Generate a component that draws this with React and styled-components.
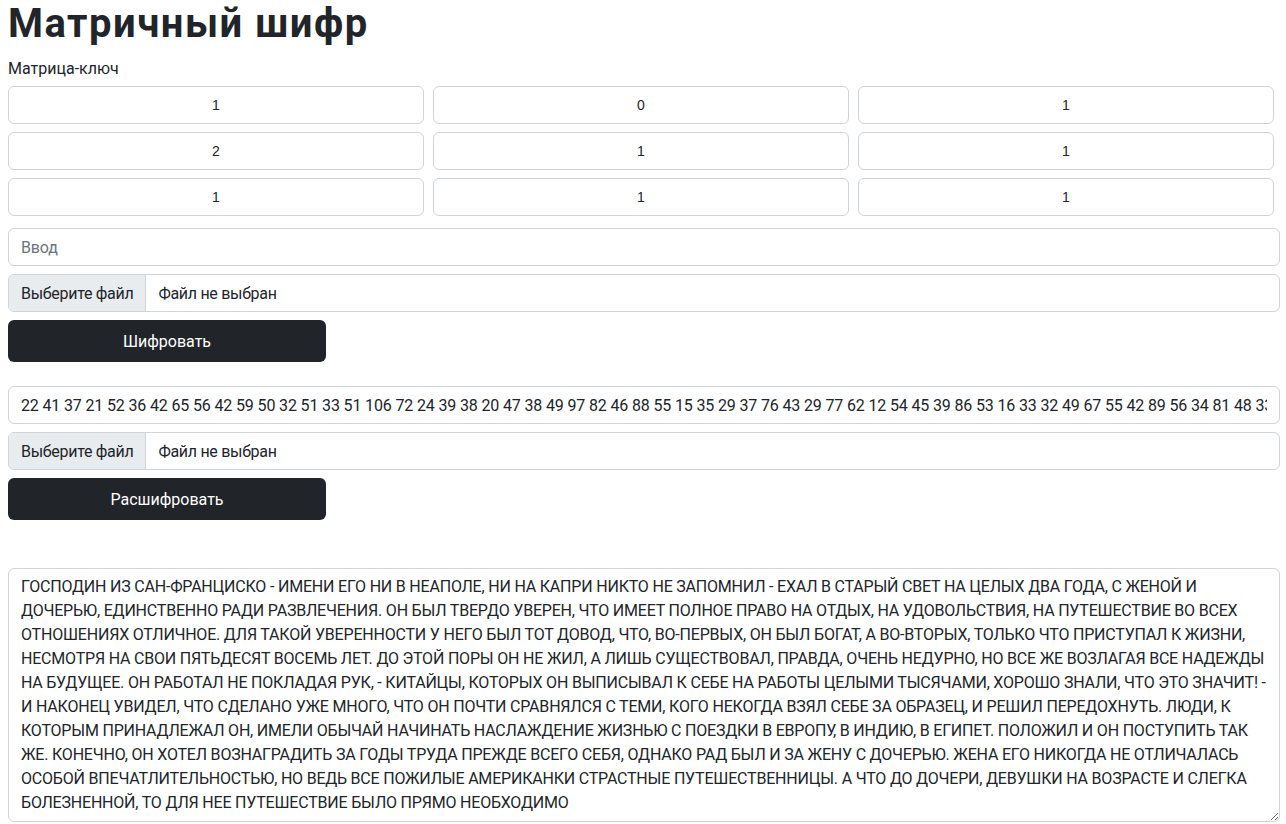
import React, { useState } from "react";
import styled, { createGlobalStyle } from "styled-components";

const FONT = `Roboto, "Open Sans", sans-serif`;

const GlobalStyle = createGlobalStyle`
  * { box-sizing: border-box; }
  body {
    margin: 0;
    font-family: ${FONT};
    font-size: 16px;
    color: #212529;
    background: #fff;
  }
`;

const Page = styled.div`
  padding: 0 6px 0 8px;
  display: flex;
  flex-direction: column;
`;

const Title = styled.h1`
  margin: 0 0 9px;
  font-size: 40px;
  line-height: 48px;
  font-weight: 700;
  letter-spacing: 1.5px;
`;

const Label = styled.label`
  font-size: 16px;
  line-height: 24px;
  margin-bottom: 5px;
`;

const Matrix = styled.div`
  width: 1266px;
  display: grid;
  grid-template-columns: repeat(3, 1fr);
  column-gap: 9px;
  row-gap: 8px;
  margin-bottom: 12px;
`;

const Cell = styled.input`
  height: 38px;
  border: 1px solid #ced4da;
  border-radius: 6px;
  text-align: center;
  font-family: "Liberation Sans", Arial, sans-serif;
  font-size: 14px;
  color: #212529;
  outline: none;
  -moz-appearance: textfield;
  &::-webkit-inner-spin-button,
  &::-webkit-outer-spin-button {
    -webkit-appearance: none;
    margin: 0;
  }
`;

const Field = styled.input`
  height: 38px;
  width: 100%;
  border: 1px solid #ced4da;
  border-radius: 6px;
  padding: 6px 12px;
  font-family: ${FONT};
  font-size: 16px;
  letter-spacing: -0.15px;
  color: #212529;
  margin-bottom: 8px;
  outline: none;
  &::placeholder { color: #6c757d; }
`;

const FileBox = styled.label`
  height: 38px;
  display: flex;
  align-items: stretch;
  border: 1px solid #ced4da;
  border-radius: 6px;
  overflow: hidden;
  margin-bottom: 8px;
  cursor: pointer;
  letter-spacing: -0.3px;
  input { display: none; }
`;

const FileButton = styled.span`
  display: flex;
  align-items: center;
  padding: 0 12px;
  background: #e9ecef;
  border-right: 1px solid #ced4da;
`;

const FileName = styled.span`
  display: flex;
  align-items: center;
  padding: 0 12px;
`;

const Action = styled.button`
  width: 318px;
  height: 42px;
  border: none;
  border-radius: 6px;
  background: #212529;
  color: #fff;
  font-family: ${FONT};
  font-size: 16px;
  margin-bottom: ${(p) => p.$after}px;
  cursor: pointer;
`;

const Output = styled.textarea`
  height: 254px;
  width: 100%;
  border: 1px solid #ced4da;
  border-radius: 6px;
  padding: 6px 12px;
  font-family: ${FONT};
  font-size: 16px;
  line-height: 24px;
  letter-spacing: -0.2px;
  color: #212529;
  outline: none;
`;

const KEY = [1, 0, 1, 2, 1, 1, 1, 1, 1];

const CIPHER =
  "22 41 37 21 52 36 42 65 56 42 59 50 32 51 33 51 106 72 24 39 38 20 47 38 49 97 82 46 88 55 15 35 29 37 76 43 29 77 62 12 54 45 39 86 53 16 33 32 49 67 55 42 89 56 34 81 48 33 61 27 44 90 58 31 46 72 19";

// строки разбиты так же, как в исходном окне
const TEXT = [
  "ГОСПОДИН ИЗ САН-ФРАНЦИСКО - ИМЕНИ ЕГО НИ В НЕАПОЛЕ, НИ НА КАПРИ НИКТО НЕ ЗАПОМНИЛ - ЕХАЛ В СТАРЫЙ СВЕТ НА ЦЕЛЫХ ДВА ГОДА, С ЖЕНОЙ И",
  "ДОЧЕРЬЮ, ЕДИНСТВЕННО РАДИ РАЗВЛЕЧЕНИЯ. ОН БЫЛ ТВЕРДО УВЕРЕН, ЧТО ИМЕЕТ ПОЛНОЕ ПРАВО НА ОТДЫХ, НА УДОВОЛЬСТВИЯ, НА ПУТЕШЕСТВИЕ ВО ВСЕХ",
  "ОТНОШЕНИЯХ ОТЛИЧНОЕ. ДЛЯ ТАКОЙ УВЕРЕННОСТИ У НЕГО БЫЛ ТОТ ДОВОД, ЧТО, ВО-ПЕРВЫХ, ОН БЫЛ БОГАТ, А ВО-ВТОРЫХ, ТОЛЬКО ЧТО ПРИСТУПАЛ К ЖИЗНИ,",
  "НЕСМОТРЯ НА СВОИ ПЯТЬДЕСЯТ ВОСЕМЬ ЛЕТ. ДО ЭТОЙ ПОРЫ ОН НЕ ЖИЛ, А ЛИШЬ СУЩЕСТВОВАЛ, ПРАВДА, ОЧЕНЬ НЕДУРНО, НО ВСЕ ЖЕ ВОЗЛАГАЯ ВСЕ НАДЕЖДЫ",
  "НА БУДУЩЕЕ. ОН РАБОТАЛ НЕ ПОКЛАДАЯ РУК, - КИТАЙЦЫ, КОТОРЫХ ОН ВЫПИСЫВАЛ К СЕБЕ НА РАБОТЫ ЦЕЛЫМИ ТЫСЯЧАМИ, ХОРОШО ЗНАЛИ, ЧТО ЭТО ЗНАЧИТ! -",
  "И НАКОНЕЦ УВИДЕЛ, ЧТО СДЕЛАНО УЖЕ МНОГО, ЧТО ОН ПОЧТИ СРАВНЯЛСЯ С ТЕМИ, КОГО НЕКОГДА ВЗЯЛ СЕБЕ ЗА ОБРАЗЕЦ, И РЕШИЛ ПЕРЕДОХНУТЬ. ЛЮДИ, К",
  "КОТОРЫМ ПРИНАДЛЕЖАЛ ОН, ИМЕЛИ ОБЫЧАЙ НАЧИНАТЬ НАСЛАЖДЕНИЕ ЖИЗНЬЮ С ПОЕЗДКИ В ЕВРОПУ, В ИНДИЮ, В ЕГИПЕТ. ПОЛОЖИЛ И ОН ПОСТУПИТЬ ТАК",
  "ЖЕ. КОНЕЧНО, ОН ХОТЕЛ ВОЗНАГРАДИТЬ ЗА ГОДЫ ТРУДА ПРЕЖДЕ ВСЕГО СЕБЯ, ОДНАКО РАД БЫЛ И ЗА ЖЕНУ С ДОЧЕРЬЮ. ЖЕНА ЕГО НИКОГДА НЕ ОТЛИЧАЛАСЬ",
  "ОСОБОЙ ВПЕЧАТЛИТЕЛЬНОСТЬЮ, НО ВЕДЬ ВСЕ ПОЖИЛЫЕ АМЕРИКАНКИ СТРАСТНЫЕ ПУТЕШЕСТВЕННИЦЫ. А ЧТО ДО ДОЧЕРИ, ДЕВУШКИ НА ВОЗРАСТЕ И СЛЕГКА",
  "БОЛЕЗНЕННОЙ, ТО ДЛЯ НЕЕ ПУТЕШЕСТВИЕ БЫЛО ПРЯМО НЕОБХОДИМО",
].join("\n");

const FilePicker = () => (
  <FileBox>
    <input type="file" />
    <FileButton>Выберите файл</FileButton>
    <FileName>Файл не выбран</FileName>
  </FileBox>
);

const App = () => {
  const [key, setKey] = useState(KEY);
  const [plain, setPlain] = useState("");
  const [cipher, setCipher] = useState(CIPHER);
  const [result, setResult] = useState(TEXT);

  const changeKey = (i, v) => {
    const next = [...key];
    next[i] = v;
    setKey(next);
  };

  return (
    <>
      <GlobalStyle />
      <Page>
        <Title>Матричный шифр</Title>
        <Label>Матрица-ключ</Label>
        <Matrix>
          {key.map((v, i) => (
            <Cell
              key={i}
              type="number"
              value={v}
              onChange={(e) => changeKey(i, e.target.value)}
            />
          ))}
        </Matrix>
        <Field
          placeholder="Ввод"
          value={plain}
          onChange={(e) => setPlain(e.target.value)}
        />
        <FilePicker />
        <Action $after={24}>Шифровать</Action>
        <Field value={cipher} onChange={(e) => setCipher(e.target.value)} />
        <FilePicker />
        <Action $after={48}>Расшифровать</Action>
        <Output value={result} onChange={(e) => setResult(e.target.value)} />
      </Page>
    </>
  );
};

export default App;
